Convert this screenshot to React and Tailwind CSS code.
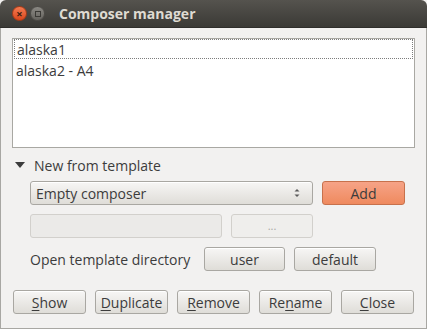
import React from 'react';

const font = { fontFamily: '"Open Sans", "DejaVu Sans", sans-serif' };

function Btn({ children, className = '' }) {
  return (
    <div
      className={`h-[24px] flex items-center justify-center rounded-[3px] border border-[#a9a7a2] bg-gradient-to-b from-[#f7f6f5] to-[#dfddd8] text-[14px] text-[#3c3c3c] shadow-[inset_0_1px_0_#ffffff] ${className}`}
    >
      {children}
    </div>
  );
}

function Mn({ text, idx }) {
  return (
    <span>
      {text.slice(0, idx)}
      <span className="underline underline-offset-2 decoration-1">{text[idx]}</span>
      {text.slice(idx + 1)}
    </span>
  );
}

export default function App() {
  return (
    <div className="w-[427px] h-[329px] flex flex-col bg-[#f2f1f0]" style={font}>
      {/* title bar */}
      <div className="h-[28px] flex items-center rounded-t-[6px] bg-gradient-to-b from-[#55534e] to-[#3b3a36] border-b border-[#2f2e2b]">
        <div className="ml-[12px] w-[15px] h-[15px] rounded-full bg-gradient-to-b from-[#f37a50] to-[#d9461b] border border-[#a83a17] flex items-center justify-center text-[11px] leading-none font-bold text-[#3a1d10]">
          ×
        </div>
        <div className="ml-[3px] w-[15px] h-[15px] rounded-full bg-gradient-to-b from-[#8a8883] to-[#66645f] border border-[#4e4c48] flex items-center justify-center">
          <div className="w-[6px] h-[6px] border border-[#3a3935]" />
        </div>
        <div className="ml-[14px] text-[14px] font-bold text-[#dfdbd2]">Composer manager</div>
      </div>

      {/* body */}
      <div className="flex-1 flex flex-col border-x border-b border-[#a8a7a3] text-[#3c3c3c] text-[14px]">
        <div className="mt-[10px] ml-[11px] w-[403px] h-[110px] border border-[#a9a8a3] bg-white flex flex-col">
          <div className="mx-[1px] h-[20px] flex items-center pl-[2px] border border-dotted border-[#7d7d7d]">alaska1</div>
          <div className="h-[22px] flex items-center pl-[3px]">alaska2 - A4</div>
        </div>

        <div className="mt-[7px] h-[20px] flex items-center">
          <svg className="ml-[14px]" width="10" height="6" viewBox="0 0 10 6">
            <path d="M0 0 L10 0 L5 6 Z" fill="#3c3c3c" />
          </svg>
          <span className="ml-[9px]">New from template</span>
        </div>

        <div className="mt-[6px] ml-[29px] flex gap-[9px]">
          <div className="w-[283px] h-[24px] flex items-center justify-between pl-[5px] pr-[11px] rounded-[3px] border border-[#a9a7a2] bg-gradient-to-b from-[#f7f6f5] to-[#dfddd8] shadow-[inset_0_1px_0_#ffffff]">
            <span>Empty composer</span>
            <svg width="8" height="12" viewBox="0 0 8 12">
              <path d="M1.5 4.5 L4 2 L6.5 4.5 Z" fill="#5a5a5a" />
              <path d="M1.5 7.5 L4 10 L6.5 7.5 Z" fill="#5a5a5a" />
            </svg>
          </div>
          <div className="w-[83px] h-[24px] flex items-center justify-center rounded-[3px] border border-[#c7714c] bg-gradient-to-b from-[#f6a387] to-[#ef8a5e] text-[#3c3c3c]">
            Add
          </div>
        </div>

        <div className="mt-[9px] ml-[29px] flex gap-[9px]">
          <div className="w-[192px] h-[24px] rounded-[3px] border border-[#d2d0cc] bg-[#ebeae8]" />
          <div className="w-[82px] h-[24px] flex items-center justify-center rounded-[3px] border border-[#d2d0cc] bg-[#efeeec] text-[11px] text-[#a8a7a4]">
            ...
          </div>
        </div>

        <div className="mt-[9px] ml-[29px] flex items-center">
          <span className="w-[174px]">Open template directory</span>
          <Btn className="w-[81px]">user</Btn>
          <Btn className="ml-[9px] w-[82px]">default</Btn>
        </div>

        <div className="mt-[19px] ml-[12px] flex gap-[9px]">
          <Btn className="w-[73px]"><Mn text="Show" idx={0} /></Btn>
          <Btn className="w-[73px]"><Mn text="Duplicate" idx={0} /></Btn>
          <Btn className="w-[73px]"><Mn text="Remove" idx={0} /></Btn>
          <Btn className="w-[73px]"><Mn text="Rename" idx={2} /></Btn>
          <Btn className="w-[73px]"><Mn text="Close" idx={0} /></Btn>
        </div>
      </div>
    </div>
  );
}
